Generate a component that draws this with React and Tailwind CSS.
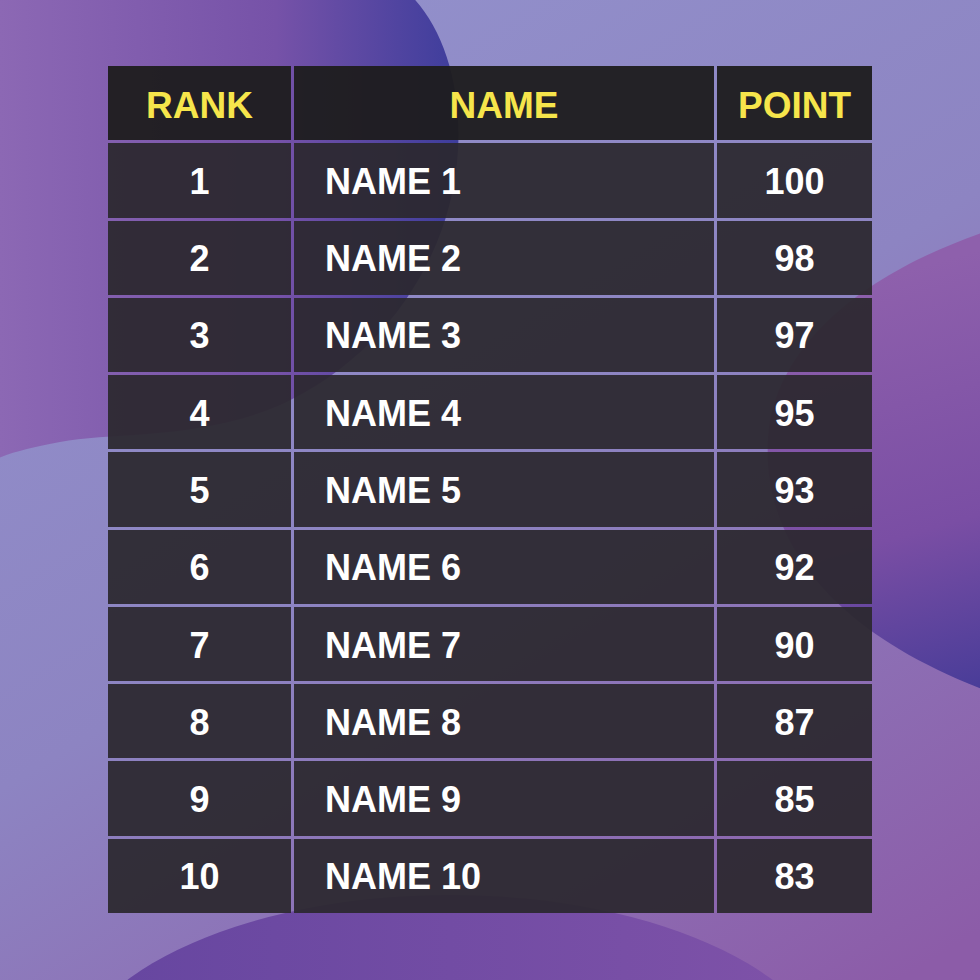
import React from 'react';

const rows = [
  [1, 'NAME 1', 100],
  [2, 'NAME 2', 98],
  [3, 'NAME 3', 97],
  [4, 'NAME 4', 95],
  [5, 'NAME 5', 93],
  [6, 'NAME 6', 92],
  [7, 'NAME 7', 90],
  [8, 'NAME 8', 87],
  [9, 'NAME 9', 85],
  [10, 'NAME 10', 83],
];

const Backdrop = () => (
  <svg
    className="absolute inset-0 w-full h-full"
    viewBox="0 0 980 980"
    preserveAspectRatio="none"
  >
    <defs>
      <linearGradient id="base" x1="300" y1="0" x2="900" y2="980" gradientUnits="userSpaceOnUse">
        <stop offset="0" stopColor="#9290cb" />
        <stop offset="0.45" stopColor="#8d84c2" />
        <stop offset="1" stopColor="#8c5ca8" />
      </linearGradient>
      <linearGradient id="topBlob" x1="0" y1="0" x2="460" y2="0" gradientUnits="userSpaceOnUse">
        <stop offset="0" stopColor="#8c68b4" />
        <stop offset="0.6" stopColor="#7652a8" />
        <stop offset="1" stopColor="#3d3d9c" />
      </linearGradient>
      <linearGradient id="rightBlob" x1="870" y1="280" x2="985" y2="690" gradientUnits="userSpaceOnUse">
        <stop offset="0" stopColor="#8e60ac" />
        <stop offset="0.6" stopColor="#7a4ea4" />
        <stop offset="1" stopColor="#483c98" />
      </linearGradient>
      <linearGradient id="bottomBlob" x1="100" y1="0" x2="800" y2="0" gradientUnits="userSpaceOnUse">
        <stop offset="0" stopColor="#6646a0" />
        <stop offset="1" stopColor="#7e52a8" />
      </linearGradient>
    </defs>
    <rect width="980" height="980" fill="url(#base)" />
    <path
      d="M -10 -10 L 405 -10 C 440 20, 462 80, 458 150 C 452 260, 380 360, 280 405 C 200 440, 110 432, 60 442 C 30 448, 10 452, -10 462 Z"
      fill="url(#topBlob)"
    />
    <path
      d="M 990 230 C 900 260, 790 320, 770 420 C 755 520, 810 625, 990 692 Z"
      fill="url(#rightBlob)"
    />
    <ellipse cx="450" cy="1082" rx="385" ry="187" fill="url(#bottomBlob)" />
  </svg>
);

export default function App() {
  return (
    <div className="relative w-[980px] h-[980px] overflow-hidden font-['Liberation_Sans',Arial,sans-serif] font-bold">
      <Backdrop />
      <div className="relative pt-[66px] pl-[108px]">
        <div className="grid grid-cols-[183px_420px_155px] grid-rows-[repeat(11,minmax(0,1fr))] gap-[3px] h-[847px]">
          <div className="flex items-center justify-center pt-[5px] bg-[#1d1c1d]/95 text-[37px] text-[#f6e54b]">RANK</div>
          <div className="flex items-center justify-center pt-[5px] bg-[#1d1c1d]/95 text-[37px] text-[#f6e54b]">NAME</div>
          <div className="flex items-center justify-center pt-[5px] bg-[#1d1c1d]/95 text-[37px] text-[#f6e54b]">POINT</div>
          {rows.map(([rank, name, point]) => (
            <React.Fragment key={rank}>
              <div className="flex items-center justify-center pt-[3px] bg-[#2b282e]/[0.93] text-[36px] text-white">{rank}</div>
              <div className="flex items-center pl-[31px] pt-[3px] bg-[#2b282e]/[0.93] text-[36px] text-white">{name}</div>
              <div className="flex items-center justify-center pt-[3px] bg-[#2b282e]/[0.93] text-[36px] text-white">{point}</div>
            </React.Fragment>
          ))}
        </div>
      </div>
    </div>
  );
}
